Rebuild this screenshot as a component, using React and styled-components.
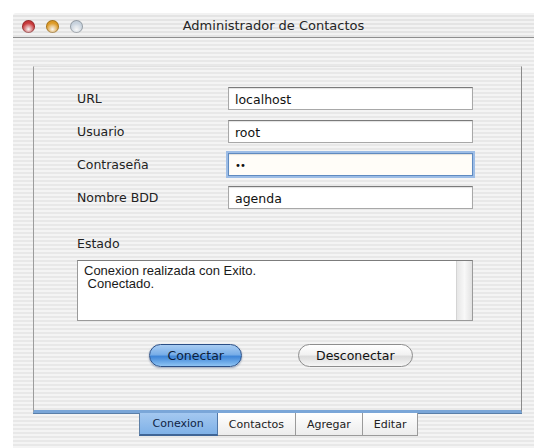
import React from "react";
import styled, { createGlobalStyle, css } from "styled-components";

const pinstripe = css`
  background: repeating-linear-gradient(
    to bottom,
    #f4f4f4 0px,
    #f4f4f4 2px,
    #e8e8e8 2px,
    #e8e8e8 4px
  );
`;

const GlobalStyle = createGlobalStyle`
  html, body {
    margin: 0;
    background: #ffffff;
    font-family: "DejaVu Sans", "Liberation Sans", sans-serif;
    overflow: hidden;
  }
`;

const fields = [
  { label: "URL", value: "localhost" },
  { label: "Usuario", value: "root" },
  { label: "Contraseña", value: "••", focused: true },
  { label: "Nombre BDD", value: "agenda" },
];

const tabs = ["Conexion", "Contactos", "Agregar", "Editar"];

const App = () => {
  return (
    <>
      <GlobalStyle />
      <Window>
        <TitleBar>
          <Lights>
            <Light $color="#c8383a" />
            <Light $color="#dd9a26" />
            <Light $color="#c7d2dd" />
          </Lights>
          <Title>Administrador de Contactos</Title>
          <span />
        </TitleBar>
        <Content>
          <TabPane>
            <Form>
              {fields.map((f) => (
                <React.Fragment key={f.label}>
                  <Label>{f.label}</Label>
                  <Field $focused={f.focused}>{f.value}</Field>
                </React.Fragment>
              ))}
            </Form>
            <StatusLabel>Estado</StatusLabel>
            <StatusBox>
              <StatusText>{"Conexion realizada con Exito.\n Conectado."}</StatusText>
              <ScrollTrack />
            </StatusBox>
            <Buttons>
              <PillButton $primary>Conectar</PillButton>
              <PillButton>Desconectar</PillButton>
            </Buttons>
          </TabPane>
          <TabBar>
            {tabs.map((t, i) => (
              <Tab key={t} $active={i === 0}>
                {t}
              </Tab>
            ))}
          </TabBar>
        </Content>
      </Window>
    </>
  );
};

export default App;

const Window = styled.div`
  margin: 13px 0 0 13px;
  height: calc(100vh - 13px);
  display: flex;
  flex-direction: column;
  border-top-left-radius: 3px;
  overflow: hidden;
`;

const TitleBar = styled.div`
  flex-shrink: 0;
  height: 24px;
  display: grid;
  grid-template-columns: 1fr auto 1fr;
  align-items: center;
  background: repeating-linear-gradient(
    to bottom,
    #f2f2f2 0px,
    #f2f2f2 2px,
    #e4e4e4 2px,
    #e4e4e4 4px
  );
  border-bottom: 1px solid #8e8e8e;
  box-shadow: 0 1px 0 #d0d0d0;
`;

const Lights = styled.div`
  display: flex;
  gap: 11px;
  padding-left: 9px;
  padding-top: 2px;
`;

const Light = styled.span`
  width: 13px;
  height: 13px;
  border-radius: 50%;
  background: radial-gradient(
    circle at 50% 70%,
    #ffffff99 0%,
    ${(p) => p.$color} 55%,
    ${(p) => p.$color} 100%
  );
  box-shadow: inset 0 0 0 1px rgba(0, 0, 0, 0.25);
`;

const Title = styled.div`
  font-size: 13px;
  color: #262626;
  padding-top: 1px;
`;

const Content = styled.div`
  flex: 1;
  min-height: 0;
  ${pinstripe};
  padding: 28px 12px 0 20px;
`;

const TabPane = styled.div`
  box-sizing: border-box;
  height: 347px;
  border-left: 1px solid #9c9c9c;
  border-right: 1px solid #8a8a8a;
  border-top: 1px solid #e2e2e2;
  border-bottom: 3px solid #7aa6d8;
  box-shadow: 0 1px 0 #5a7fa9;
  padding: 20px 48px 0 43px;
  display: flex;
  flex-direction: column;
`;

const Form = styled.div`
  display: grid;
  grid-template-columns: 151px 1fr;
  row-gap: 10px;
  align-items: center;
`;

const Label = styled.div`
  font-size: 12.5px;
  color: #222;
`;

const Field = styled.div`
  height: 23px;
  box-sizing: border-box;
  background: #ffffff;
  border: 1px solid #a8a8a8;
  border-top-color: #7a7a7a;
  box-shadow: inset 0 1px 1px rgba(0, 0, 0, 0.12);
  padding: 2px 6px 0;
  font-size: 12.5px;
  line-height: 19px;
  color: #111;

  ${(p) =>
    p.$focused &&
    css`
      background: #fffdf8;
      border-color: #5f8ac0;
      box-shadow: 0 0 0 2px #9dbde6, inset 0 1px 1px rgba(0, 0, 0, 0.12);
      font-size: 10px;
      letter-spacing: -1px;
    `}
`;

const StatusLabel = styled.div`
  margin-top: 27px;
  font-size: 12.5px;
  color: #222;
`;

const StatusBox = styled.div`
  margin-top: 9px;
  height: 61px;
  box-sizing: border-box;
  display: flex;
  background: #ffffff;
  border: 1px solid #9a9a9a;
  border-top-color: #7c7c7c;
`;

const StatusText = styled.pre`
  flex: 1;
  margin: 0;
  padding: 3px 6px;
  font-family: "Liberation Sans", Arial, sans-serif;
  font-size: 13px;
  line-height: 13px;
  color: #1a1a1a;
`;

const ScrollTrack = styled.div`
  width: 15px;
  border-left: 1px solid #d4d4d4;
  background: linear-gradient(to right, #e6e6e6, #f8f8f8 50%, #e2e2e2);
`;

const Buttons = styled.div`
  margin-top: 23px;
  display: flex;
  justify-content: center;
  gap: 56px;
  padding-left: 12px;
`;

const PillButton = styled.div`
  height: 23px;
  box-sizing: border-box;
  padding: 0 17px;
  border-radius: 12px;
  display: flex;
  align-items: center;
  font-size: 12.5px;
  color: #111;
  border: 1px solid #8d8d8d;
  background: linear-gradient(to bottom, #ffffff 0%, #f2f2f2 45%, #dcdcdc 55%, #f6f6f6 100%);

  ${(p) =>
    p.$primary &&
    css`
      border-color: #2b4f86;
      color: #0d1f3d;
      background: linear-gradient(
        to bottom,
        #a9cdf3 0%,
        #79aee8 45%,
        #3f86d8 55%,
        #8ec3f3 100%
      );
      box-shadow: 0 1px 2px rgba(20, 50, 100, 0.4);
    `}
`;

const TabBar = styled.div`
  display: flex;
  justify-content: center;
  padding-left: 2px;
`;

const Tab = styled.div`
  height: 23px;
  box-sizing: border-box;
  padding: 0 11px;
  display: flex;
  align-items: center;
  font-size: 11px;
  color: #222;
  border: 1px solid #9a9a9a;
  border-top: none;
  border-left: none;
  background: linear-gradient(to bottom, #ffffff, #ececec);

  &:first-child {
    border-left: 1px solid #5d7fa6;
  }

  ${(p) =>
    p.$active &&
    css`
      border-color: #4f77a8;
      border-bottom: 2px solid #3f6596;
      background: linear-gradient(to bottom, #a4c8f0, #7fb1e7);
      color: #0f2444;
      padding: 0 13px;
    `}
`;
